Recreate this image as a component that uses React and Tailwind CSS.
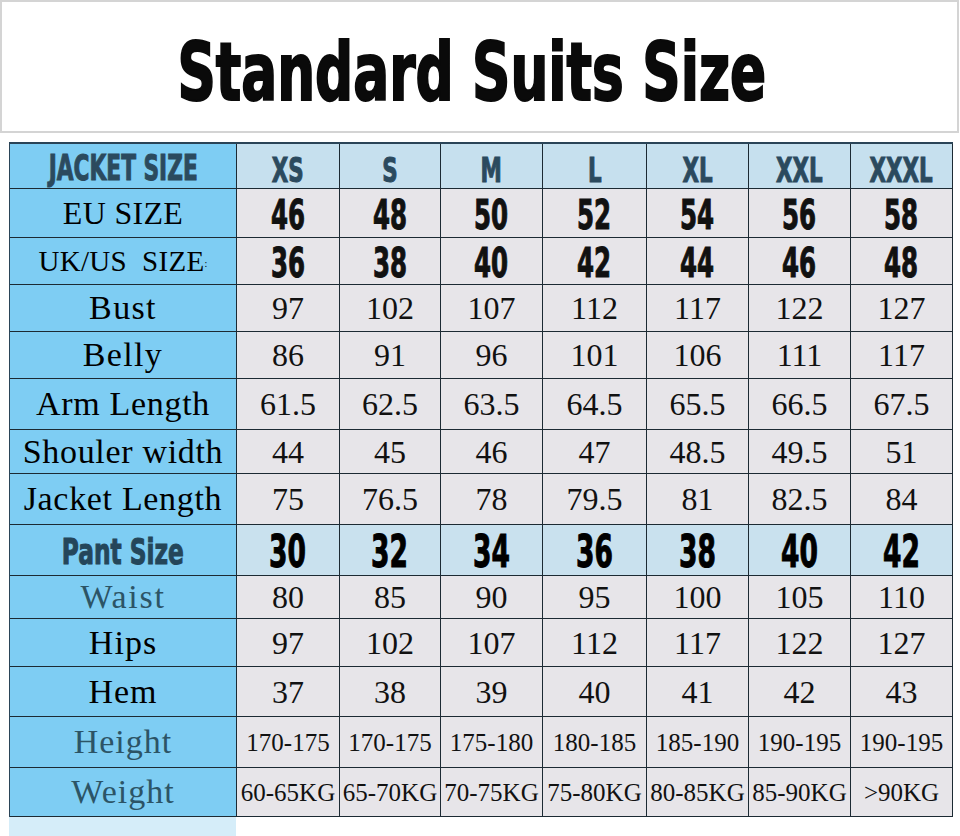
import React from 'react';

const condensed = '[font-family:"DejaVu_Sans_Condensed","Liberation_Sans",sans-serif]';
const serif = '[font-family:"Liberation_Serif","Times_New_Roman",serif]';

const sizes = ['XS', 'S', 'M', 'L', 'XL', 'XXL', 'XXXL'];

// label, values, kind, row height
const rows = [
  { label: 'EU SIZE', values: ['46', '48', '50', '52', '54', '56', '58'], kind: 'bold', h: 'h-[49px]', labelClass: 'text-[32px] text-black tracking-[0.01em]' },
  { label: 'UK/US  SIZE', values: ['36', '38', '40', '42', '44', '46', '48'], kind: 'bold', h: 'h-[47px]', labelClass: 'text-[29px] text-black tracking-[0.01em]', colon: true },
  { label: 'Bust', values: ['97', '102', '107', '112', '117', '122', '127'], h: 'h-[47px]', labelClass: 'text-[34px] text-black tracking-[0.04em]' },
  { label: 'Belly', values: ['86', '91', '96', '101', '106', '111', '117'], h: 'h-[47px]', labelClass: 'text-[34px] text-black tracking-[0.04em]' },
  { label: 'Arm Length', values: ['61.5', '62.5', '63.5', '64.5', '65.5', '66.5', '67.5'], h: 'h-[51px]', labelClass: 'text-[34px] text-black tracking-[0.02em]' },
  { label: 'Shouler width', values: ['44', '45', '46', '47', '48.5', '49.5', '51'], h: 'h-[44px]', labelClass: 'text-[34px] text-black tracking-[0.02em]' },
  { label: 'Jacket Length', values: ['75', '76.5', '78', '79.5', '81', '82.5', '84'], h: 'h-[51px]', labelClass: 'text-[34px] text-black tracking-[0.02em]' },
];

const pantRows = [
  { label: 'Waist', values: ['80', '85', '90', '95', '100', '105', '110'], h: 'h-[43px]', labelClass: 'text-[34px] text-[#2c5466] tracking-[0.05em]' },
  { label: 'Hips', values: ['97', '102', '107', '112', '117', '122', '127'], h: 'h-[48px]', labelClass: 'text-[34px] text-black tracking-[0.03em]' },
  { label: 'Hem', values: ['37', '38', '39', '40', '41', '42', '43'], h: 'h-[50px]', labelClass: 'text-[34px] text-black tracking-[0.03em]' },
  { label: 'Height', values: ['170-175', '170-175', '175-180', '180-185', '185-190', '190-195', '190-195'], kind: 'small', h: 'h-[51px]', labelClass: 'text-[34px] text-[#2c5466] tracking-[0.03em]' },
  { label: 'Weight', values: ['60-65KG', '65-70KG', '70-75KG', '75-80KG', '80-85KG', '85-90KG', '>90KG'], kind: 'small', h: 'h-[49px]', labelClass: 'text-[34px] text-[#2c5466] tracking-[0.03em]' },
];

function Cond({ children, className = '' }) {
  return <span className={`inline-block font-bold leading-none whitespace-nowrap ${condensed} ${className}`}>{children}</span>;
}

function LabelCell({ children, h, className = '' }) {
  return (
    <div className={`${h} bg-[#7ecdf3] border-r border-b border-[#1c2a33] flex items-center justify-center whitespace-pre ${className}`}>
      {children}
    </div>
  );
}

function ValueCell({ children, h, bg = 'bg-[#e7e5e9]' }) {
  return (
    <div className={`${h} ${bg} border-r border-b border-[#1c2a33] flex items-center justify-center whitespace-nowrap`}>
      {children}
    </div>
  );
}

function DataRow({ row }) {
  return (
    <>
      <LabelCell h={row.h}>
        <span className={`${serif} leading-none ${row.labelClass}`}>
          {row.label}
          {row.colon && <span className="text-[10px] align-middle">:</span>}
        </span>
      </LabelCell>
      {row.values.map((v, i) => (
        <ValueCell key={i} h={row.h}>
          {row.kind === 'bold' ? (
            <Cond className="text-[40px] text-[#111] scale-x-[0.68] pt-1 [-webkit-text-stroke:1px_#111]">{v}</Cond>
          ) : row.kind === 'small' ? (
            <span className={`${serif} text-[25px] text-[#111] leading-none`}>{v}</span>
          ) : (
            <span className={`${serif} text-[32px] text-[#111] leading-none`}>{v}</span>
          )}
        </ValueCell>
      ))}
    </>
  );
}

export default function App() {
  return (
    <div className="w-[960px] h-[836px] bg-white overflow-hidden">
      <div className="h-[133px] w-[959px] border-2 border-[#d4d4d4] flex items-center justify-center pr-4">
        <Cond className="text-[80px] text-[#0a0a0a] scale-x-[0.74] pt-3 [-webkit-text-stroke:2px_#0a0a0a]">Standard Suits Size</Cond>
      </div>

      <div className="mt-[9px] ml-[9px] w-[944px] grid grid-cols-[227px_103px_101px_102px_104px_102px_102px_102px] border-t-2 border-l border-[#2a4457]">
        <LabelCell h="h-[45px]">
          <Cond className="text-[36px] text-[#2b4a5e] scale-x-[0.67] pt-1 [-webkit-text-stroke:1px_#2b4a5e]">JACKET SIZE</Cond>
        </LabelCell>
        {sizes.map((s) => (
          <ValueCell key={s} h="h-[45px]" bg="bg-[#c6e0ee]">
            <Cond className="text-[34px] text-[#2b4a5e] scale-x-[0.7] pt-2 [-webkit-text-stroke:1px_#2b4a5e]">{s}</Cond>
          </ValueCell>
        ))}

        {rows.map((r) => (
          <DataRow key={r.label} row={r} />
        ))}

        <LabelCell h="h-[51px]">
          <Cond className="text-[36px] text-[#24465a] scale-x-[0.72] pt-1 [-webkit-text-stroke:1px_#24465a]">Pant Size</Cond>
        </LabelCell>
        {['30', '32', '34', '36', '38', '40', '42'].map((v) => (
          <ValueCell key={v} h="h-[51px]" bg="bg-[#c9e1ee]">
            <Cond className="text-[44px] text-black scale-x-[0.67] pt-1 [-webkit-text-stroke:1px_#000]">{v}</Cond>
          </ValueCell>
        ))}

        {pantRows.map((r) => (
          <DataRow key={r.label} row={r} />
        ))}
      </div>
      <div className="ml-[9px] w-[227px] h-[20px] bg-[#d5edf9]" />
    </div>
  );
}
